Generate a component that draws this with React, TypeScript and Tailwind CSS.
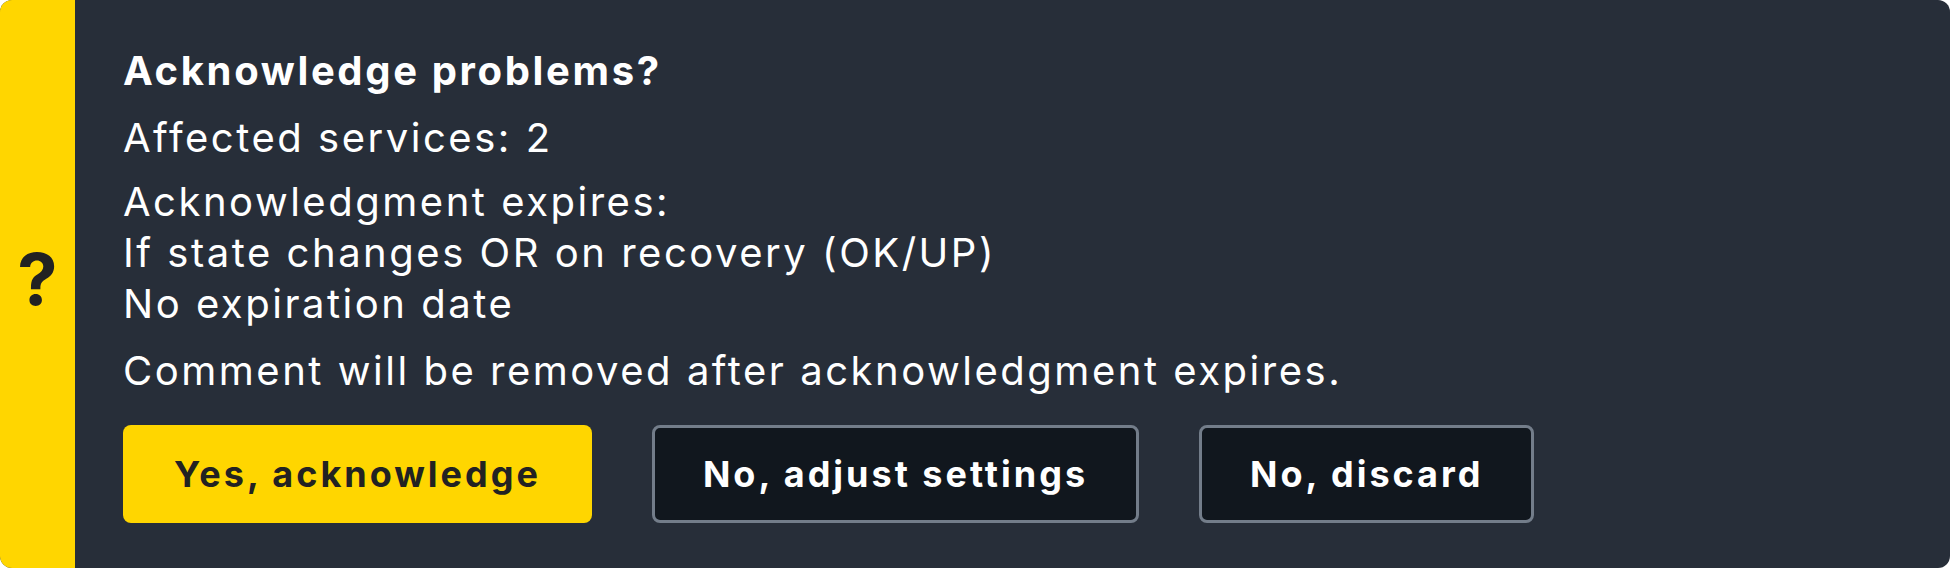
export default function App() {
  return (
    <div className="w-[1950px] h-[568px] bg-white">
      <div
        className="flex h-full w-full overflow-hidden rounded-[12px] bg-[#272e39] text-white"
        style={{ fontFamily: 'Inter, "Noto Sans", sans-serif' }}
      >
        {/* Left status strip */}
        <div className="flex w-[75px] shrink-0 items-center justify-center bg-[#ffd600] pb-[10px]">
          <span className="text-[72px] font-bold leading-none text-[#222222]">?</span>
        </div>

        {/* Content */}
        <div className="flex flex-1 flex-col pl-[48px] pt-[45px] pb-[46px]">
          <h1 className="text-[40px] font-bold leading-[51px] tracking-[0.066em]">
            Acknowledge problems?
          </h1>
          <p className="mt-4 text-[40px] leading-[51px] tracking-[0.063em]">Affected services: 2</p>
          <div className="mt-[13px] text-[40px] leading-[51px] tracking-[0.063em]">
            <div>Acknowledgment expires:</div>
            <div>If state changes OR on recovery (OK/UP)</div>
            <div>No expiration date</div>
          </div>
          <p className="mt-4 text-[40px] leading-[51px] tracking-[0.063em]">
            Comment will be removed after acknowledgment expires.
          </p>

          <div className="mt-[29px] flex gap-[60px]">
            <button className="flex h-[98px] items-center rounded-[8px] bg-[#ffd600] px-[51px] text-[36px] font-bold tracking-[0.083em] text-[#222222]">
              Yes, acknowledge
            </button>
            <button className="flex h-[98px] items-center rounded-[8px] border-[3px] border-[#737d8a] bg-[#11171e] px-[48px] text-[36px] font-bold tracking-[0.083em] text-white">
              No, adjust settings
            </button>
            <button className="flex h-[98px] items-center rounded-[8px] border-[3px] border-[#737d8a] bg-[#11171e] px-[48px] text-[36px] font-bold tracking-[0.083em] text-white">
              No, discard
            </button>
          </div>
        </div>
      </div>
    </div>
  )
}
